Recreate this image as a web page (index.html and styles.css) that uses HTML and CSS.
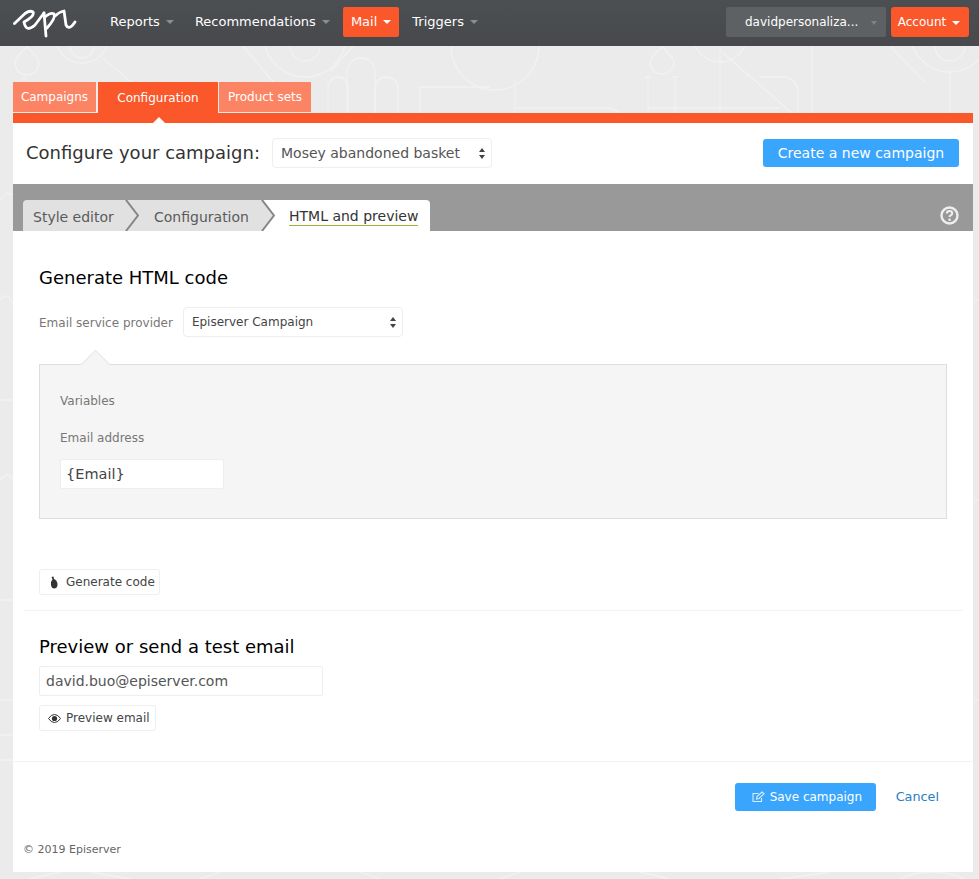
FILE: index.html
```html
<!DOCTYPE html>
<html lang="en">
<head>
<meta charset="utf-8">
<title>Configure your campaign</title>
<link rel="stylesheet" href="styles.css">
</head>
<body>
<svg class="pattern" width="979" height="879" viewBox="0 0 979 879" fill="none" stroke="#f2f2f2" stroke-width="1.300" aria-hidden="true">
  <path d="M27 47Q39 58 39 63A12 12 0 0 1 15 63Q15 58 27 47Z"/>
  <circle cx="82" cy="36" r="27"/><path d="M70 46A12 12 0 0 0 94 46"/>
  <path d="M103 58L143 92M143 90H160Q172 95 172 113M36 86V113M24 77V113"/>
  <circle cx="305" cy="36" r="41"/><path d="M290 46A15 15 0 0 0 320 46"/>
  <path d="M243 46L280 90M353 46L330 72"/>
  <rect x="328" y="77" width="20" height="50" rx="10"/><rect x="347" y="58" width="28" height="70" rx="14"/><rect x="375" y="77" width="23" height="50" rx="11"/>
  <path d="M420 113V87H490"/><circle cx="495" cy="46" r="44"/>
  <path d="M515 80V113M517 108H607Q622 110 623 120"/>
  <path d="M662 47Q674 58 674 62A12 12 0 0 1 650 62Q650 58 662 47Z"/><circle cx="720" cy="35" r="27"/>
  <path d="M720 46V113M723 53L792 113M648 77V113M675 77V113M645 77H651M672 77H678M648 108H780M760 77H785Q798 80 798 93V113M812 46V113"/>
  <circle cx="950" cy="32" r="40"/><path d="M935 46A15 15 0 0 0 965 46M950 72V113M890 46L925 82"/>
  <path d="M0 200Q8 190 13 195M0 300Q8 290 13 305M0 400H13M0 480Q8 470 13 480M0 600H13M0 700H13M0 735H13M0 760H13M975 300H979M975 500H979M975 700H979"/>
  <path d="M30 879L60 872M90 872L130 879M220 872L200 879M360 872L380 879M520 872L500 879M640 872L670 879M780 879L830 872M900 879Q930 865 965 879"/>
</svg>
<header class="topbar">
  <svg class="logo" width="64" height="38" viewBox="0 0 64 38" fill="none" stroke="#fff" stroke-width="2.800" stroke-linecap="round" stroke-linejoin="round" aria-label="Episerver">
    <path d="M1.500 19.500 L12 9.500 Q17 6 20 8 Q22 12 11 18 Q13 29 22 21 L31 9"/>
    <path d="M31 9 L33 32"/>
    <path d="M32 13 Q38 8 41 10 Q43 14 34 24"/>
    <path d="M42 12 Q46 8 51 7 L53 21 Q56 27 62 18"/>
  </svg>
  <nav class="mainnav">
    <a class="navitem">Reports<span class="caret muted"></span></a>
    <a class="navitem">Recommendations<span class="caret muted"></span></a>
    <a class="navitem active">Mail<span class="caret"></span></a>
    <a class="navitem">Triggers<span class="caret muted"></span></a>
  </nav>
  <div class="account-select"><span>davidpersonaliza...</span><span class="caret small"></span></div>
  <a class="account">Account<span class="caret"></span></a>
</header>

<main class="page">
  <div class="toptabs">
    <a class="toptab">Campaigns</a>
    <a class="toptab current">Configuration</a>
    <a class="toptab">Product sets</a>
  </div>
  <div class="orangebar"></div>
  <section class="panel">
    <div class="configure">
      <h1>Configure your campaign:</h1>
      <div class="select campaign-select">Mosey abandoned basket<span class="updown"></span></div>
      <a class="btn-primary create">Create a new campaign</a>
    </div>
    <div class="band">
      <div class="steps">
        <a class="step first">Style editor<svg class="chev" width="14" height="31" viewBox="0 0 14 31" fill="none"><path d="M0 0H1L13 15.500L1 31H0Z" fill="#e1e1e1"/><path d="M1 0L13 15.500L1 31" stroke="#858585" stroke-width="2"/></svg></a>
        <a class="step second">Configuration<svg class="chev" width="14" height="31" viewBox="0 0 14 31" fill="none"><path d="M0 0H1L13 15.500L1 31H0Z" fill="#e1e1e1"/><path d="M1 0L13 15.500L1 31" stroke="#858585" stroke-width="2"/></svg></a>
        <a class="step current"><span>HTML and preview</span></a>
      </div>
      <svg class="help" width="19" height="19" viewBox="0 0 19 19" fill="none"><circle cx="9.500" cy="9.500" r="8" stroke="#efefef" stroke-width="2.400"/><path d="M6.800 7.500Q7 5 9.500 5Q12.200 5 12.200 7.200Q12.200 8.600 10.700 9.300Q9.600 9.900 9.600 11" stroke="#efefef" stroke-width="2.100"/><circle cx="9.600" cy="13.700" r="1.300" fill="#efefef"/></svg>
    </div>
    <div class="content">
      <h2 class="gen-title">Generate HTML code</h2>
      <div class="provider">
        <label>Email service provider</label>
        <div class="select provider-select">Episerver Campaign<span class="updown"></span></div>
      </div>
      <div class="variables">
        <div class="var-title">Variables</div>
        <div class="var-label">Email address</div>
        <div class="input email-var">{Email}</div>
      </div>
      <a class="btn gen-btn"><svg width="10" height="13" viewBox="0 0 10 13"><path d="M2.500 1L4.500 .5 5 3Q8 4 8.500 8Q8.700 12 5.500 12.500Q2.500 12.500 2 9Q1.800 5 3.500 3.300Z" fill="#333"/></svg>Generate code</a>
    </div>
    <div class="rule"></div>
    <div class="content preview">
      <h2>Preview or send a test email</h2>
      <div class="input test-email">david.buo@episerver.com</div>
      <a class="btn prev-btn"><svg width="13" height="9" viewBox="0 0 13 9"><path d="M.5 4.500Q3 .5 6.500 .5T12.500 4.500Q10 8.500 6.500 8.500T.5 4.500Z" fill="none" stroke="#333"/><circle cx="6.500" cy="4.500" r="2.600" fill="#333"/></svg>Preview email</a>
    </div>
    <div class="actions">
      <a class="btn-primary save"><svg width="13" height="12" viewBox="0 0 13 12" fill="none" stroke="#d8eeff" stroke-width="1.100"><path d="M9.500 7V10.500H1V2.500H6.500"/><path d="M4.500 8L5 5.500L10 1L12 2.800L7 7.500Z"/></svg>Save campaign</a>
      <a class="cancel">Cancel</a>
    </div>
    <footer class="copy">© 2019 Episerver</footer>
  </section>
</main>
</body>
</html>
```
FILE: styles.css
```css
* { box-sizing: border-box; }
html, body { margin: 0; padding: 0; }
body {
  position: relative;
  width: 979px;
  height: 879px;
  overflow: hidden;
  background: #ebebeb;
  font-family: "DejaVu Sans", Verdana, sans-serif;
  font-size: 12px;
  color: #444;
}
h1, h2 { margin: 0; font-weight: 400; }
a { cursor: pointer; }
.pattern { position: absolute; left: 0; top: 0; }

.topbar {
  position: relative;
  height: 46px;
  display: flex;
  align-items: center;
  background: linear-gradient(#4c4f51, #47494c);
  padding-left: 13px;
}
.logo { flex: none; }
.mainnav { display: flex; align-items: center; margin-left: 25px; gap: 0; }
.navitem {
  display: flex;
  align-items: center;
  height: 30px;
  padding: 0 8px;
  margin-right: 5px;
  color: #fff;
  font-size: 13px;
  border-radius: 2px;
  margin-top: -3px;
}
.navitem.active { background: #fa572b; }
.caret {
  display: inline-block;
  width: 0; height: 0;
  margin-left: 6px;
  margin-top: 1px;
  border-left: 4px solid transparent;
  border-right: 4px solid transparent;
  border-top: 4px solid #fff;
}
.caret.muted { border-top-color: #8b8e90; }
.caret.small { border-left-width: 3px; border-right-width: 3px; border-top-color: #7f8385; }
.account-select {
  margin-left: auto;
  width: 160px;
  height: 30px;
  margin-top: -2px;
  background: #5e6163;
  color: #fff;
  font-size: 12px;
  display: flex;
  align-items: center;
  justify-content: space-between;
  padding: 0 9px 0 19px;
  border-radius: 2px;
}
.account {
  margin-left: 5px;
  margin-right: 10px;
  width: 78px;
  height: 30px;
  margin-top: -2px;
  padding-right: 2px;
  background: #fa572b;
  color: #fff;
  font-size: 12px;
  display: flex;
  align-items: center;
  justify-content: center;
  border-radius: 3px;
}

.page { position: relative; width: 960px; margin: 36px 0 0 13px; }
.toptabs { display: flex; align-items: flex-end; height: 31px; }
.toptab {
  width: 83px;
  height: 30px;
  margin: 0 2px 1px 0;
  background: #fb8465;
  color: #fff;
  font-size: 12px;
  display: flex;
  align-items: center;
  justify-content: center;
  padding-bottom: 1px;
}
.toptab:nth-child(3) { width: 92px; }
.toptab.current { width: 120px; height: 31px; margin: 0 1px 0 0; background: #fa572b; padding: 0; }
.orangebar { position: relative; height: 10px; background: #fa572b; }
.orangebar::after {
  content: "";
  position: absolute;
  left: 140px;
  bottom: 0;
  border-left: 6px solid transparent;
  border-right: 6px solid transparent;
  border-bottom: 6px solid #fff;
}
.panel { background: #fff; height: 749px; }
.configure { height: 61px; display: flex; align-items: center; padding: 0 14px 2px 13px; }
.configure h1 { font-size: 18px; color: #333; }
.select {
  position: relative;
  display: flex;
  align-items: center;
  background: #fff;
  border: 1px solid #eee;
  border-radius: 4px;
}
.updown { position: absolute; right: 5px; top: 50%; margin-top: -5px; width: 7px; height: 11px; }
.updown::before, .updown::after { content: ""; position: absolute; left: 0; border-left: 3.5px solid transparent; border-right: 3.5px solid transparent; }
.updown::before { top: 0; border-bottom: 4.5px solid #444; }
.updown::after { bottom: 0; border-top: 4.5px solid #444; }
.campaign-select { width: 220px; height: 30px; margin-left: 12px; padding-left: 8px; font-size: 14px; color: #555; }
.btn-primary {
  display: flex;
  align-items: center;
  justify-content: center;
  background: #3aa5fc;
  color: #fff;
  border-radius: 3px;
}
.create { margin-left: auto; width: 196px; height: 28px; font-size: 14px; }

.band { position: relative; height: 47px; background: #999; display: flex; align-items: flex-end; padding-left: 10px; }
.steps { display: flex; height: 31px; }
.step { position: relative; display: flex; align-items: center; padding-top: 2px; font-size: 14px; color: #5b5b5b; background: #e1e1e1; }
.step .chev { position: absolute; left: 100%; top: 0; z-index: 1; }
.step.first { width: 102px; padding-left: 10px; border-radius: 4px 0 0 0; }
.step.second { width: 136px; padding-left: 29px; }
.step.current { width: 169px; padding-left: 28px; background: #fff; color: #333; border-radius: 0 4px 0 0; }
.step.current span { border-bottom: 1px solid #9ab53a; line-height: 17px; }
.help { position: absolute; right: 14px; top: 22px; }

.content { padding: 0 26px; }
.gen-title { padding-top: 36px; font-size: 18px; line-height: 22px; color: #000; }
.provider { display: flex; align-items: center; margin-top: 18px; }
.provider label { padding-top: 2px; font-size: 12px; color: #777; }
.provider-select { width: 220px; height: 30px; margin-left: 10px; padding-left: 8px; font-size: 12px; color: #444; }
.variables {
  position: relative;
  width: 908px;
  height: 155px;
  margin-top: 27px;
  background: #f5f5f5;
  border: 1px solid #ddd;
  padding: 28px 20px 0;
}
.variables::before {
  content: "";
  position: absolute;
  left: 45px;
  top: -11px;
  width: 20px;
  height: 20px;
  background: #f5f5f5;
  border-top: 1px solid #e6e6e6;
  border-left: 1px solid #e6e6e6;
  transform: rotate(45deg);
}
.var-title, .var-label { font-size: 12px; line-height: 16px; color: #777; position: relative; }
.var-label { margin-top: 21px; }
.input { display: flex; align-items: center; background: #fff; border: 1px solid #eee; border-radius: 2px; }
.email-var { width: 164px; height: 30px; margin-top: 13px; padding-left: 5px; font-size: 14.500px; color: #444; }
.btn {
  display: inline-flex;
  align-items: center;
  height: 26px;
  background: #fff;
  border: 1px solid #eee;
  border-radius: 3px;
  font-size: 12px;
  color: #444;
}
.btn svg { flex: none; }
.gen-btn { width: 121px; margin-top: 50px; padding-left: 9px; gap: 7px; vertical-align: top; }
.rule { height: 1px; margin: 15px 0 0 11px; width: 939px; background: #f3f3f3; }
.preview h2 { padding-top: 25px; font-size: 18px; line-height: 22px; color: #000; }
.test-email { width: 284px; height: 30px; margin-top: 8px; padding-left: 6px; font-size: 14px; color: #555; }
.prev-btn { width: 117px; margin-top: 9px; padding-left: 8px; gap: 5px; vertical-align: top; }
.actions {
  display: flex;
  align-items: center;
  justify-content: flex-end;
  height: 70px;
  margin-top: 30px;
  padding: 0 34px 0 0;
  border-top: 1px solid #f3f3f3;
}
.save { width: 141px; height: 28px; gap: 5px; padding-left: 17px; justify-content: flex-start; font-size: 12px; }
.cancel { margin-left: 20px; font-size: 12.800px; color: #2b7cc2; }
.copy { padding: 12px 0 0 10px; font-size: 11px; color: #666; }
```
